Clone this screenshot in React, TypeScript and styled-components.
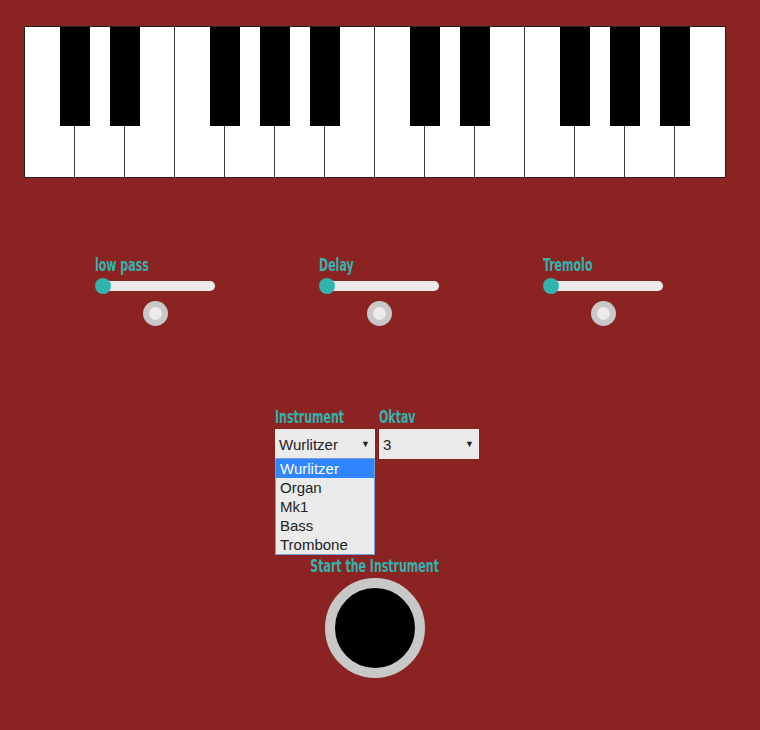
import React from 'react';
import styled, { createGlobalStyle } from 'styled-components';

const GlobalStyle = createGlobalStyle`
  html, body {
    margin: 0;
    padding: 0;
    background: #8b2323;
  }
  body {
    font-family: "Liberation Sans", Arial, sans-serif;
  }
`;

const Page = styled.div`
  width: 760px;
  height: 730px;
  background: #8b2323;
  padding-top: 26px;
  box-sizing: border-box;
`;

const Keyboard = styled.div`
  position: relative;
  display: flex;
  margin-left: 24px;
  width: 702px;
  height: 152px;
  border: 1px solid #222;
  box-sizing: border-box;
  background: #fff;
`;

const WhiteKey = styled.div<{ $last?: boolean }>`
  width: 50px;
  height: 100%;
  background: #fff;
  border-right: ${p => (p.$last ? 'none' : '1px solid #3a3a3a')};
  box-sizing: border-box;
`;

const BlackKey = styled.div`
  position: absolute;
  top: 0;
  width: 30px;
  height: 99px;
  background: #000;
`;

const Label = styled.div<{ $center?: boolean }>`
  display: inline-block;
  font-family: "DejaVu Sans Condensed", "DejaVu Sans", sans-serif;
  font-weight: bold;
  font-size: 18px;
  line-height: 20px;
  color: #31b3ae;
  white-space: nowrap;
  transform: scaleX(0.68);
  transform-origin: ${p => (p.$center ? 'center' : 'left')};
`;

const Effects = styled.div`
  display: flex;
  gap: 104px;
  margin-top: 77px;
  margin-left: 95px;
`;

const Effect = styled.div`
  width: 120px;
  display: flex;
  flex-direction: column;
`;

const Track = styled.div`
  position: relative;
  margin-top: 6px;
  margin-left: 1px;
  width: 119px;
  height: 10px;
  border-radius: 5px;
  background: #ebebeb;
`;

const Thumb = styled.div`
  position: absolute;
  left: -1px;
  top: -3px;
  width: 16px;
  height: 16px;
  border-radius: 50%;
  background: #31b3ae;
`;

const Toggle = styled.div`
  align-self: center;
  margin-top: 10px;
  width: 25px;
  height: 25px;
  border-radius: 50%;
  background: #c8c8c8;
  display: flex;
  align-items: center;
  justify-content: center;
  &::after {
    content: '';
    width: 13px;
    height: 13px;
    border-radius: 50%;
    background: #ebebeb;
  }
`;

const Controls = styled.div`
  display: flex;
  gap: 4px;
  margin-top: 81px;
  margin-left: 275px;
`;

const Field = styled.div`
  position: relative;
  display: flex;
  flex-direction: column;
  width: 100px;
`;

const SelectBox = styled.div`
  margin-top: 2px;
  height: 30px;
  background: #ebebeb;
  display: flex;
  align-items: center;
  justify-content: space-between;
  padding: 0 4px;
  box-sizing: border-box;
  font-size: 15px;
  color: #222;
`;

const Arrow = styled.span`
  font-size: 9px;
  color: #222;
  margin-right: 1px;
`;

const OptionList = styled.div`
  position: absolute;
  top: 51px;
  left: 0;
  width: 100px;
  border: 1px solid #7a9cd8;
  box-sizing: border-box;
  background: #ebebeb;
`;

const Option = styled.div<{ $active?: boolean }>`
  height: 19px;
  line-height: 19px;
  padding-left: 4px;
  font-size: 15px;
  color: ${p => (p.$active ? '#fff' : '#222')};
  background: ${p => (p.$active ? '#2f86ff' : 'transparent')};
`;

const Start = styled.div`
  display: flex;
  flex-direction: column;
  align-items: center;
  width: 760px;
  margin-top: 97px;
  margin-left: -5px;
`;

const PowerButton = styled.div`
  margin-top: 2px;
  width: 100px;
  height: 100px;
  border-radius: 50%;
  border: 10px solid #c8c8c8;
  box-sizing: border-box;
  background: #000;
`;

const blackOffsets = [60, 110, 210, 260, 310, 410, 460, 560, 610, 660];
const effects = ['low pass', 'Delay', 'Tremolo'];
const instruments = ['Wurlitzer', 'Organ', 'Mk1', 'Bass', 'Trombone'];

export default function App() {
  return (
    <Page>
      <GlobalStyle />
      <Keyboard>
        {Array.from({ length: 14 }).map((_, i) => (
          <WhiteKey key={i} $last={i === 13} />
        ))}
        {blackOffsets.map(x => (
          <BlackKey key={x} style={{ left: x - 25 }} />
        ))}
      </Keyboard>

      <Effects>
        {effects.map(name => (
          <Effect key={name}>
            <Label>{name}</Label>
            <Track>
              <Thumb />
            </Track>
            <Toggle />
          </Effect>
        ))}
      </Effects>

      <Controls>
        <Field>
          <Label>Instrument</Label>
          <SelectBox>
            <span>Wurlitzer</span>
            <Arrow>▼</Arrow>
          </SelectBox>
          <OptionList>
            {instruments.map((name, i) => (
              <Option key={name} $active={i === 0}>{name}</Option>
            ))}
          </OptionList>
        </Field>
        <Field>
          <Label>Oktav</Label>
          <SelectBox>
            <span>3</span>
            <Arrow>▼</Arrow>
          </SelectBox>
        </Field>
      </Controls>

      <Start>
        <Label $center>Start the Instrument</Label>
        <PowerButton />
      </Start>
    </Page>
  );
}
